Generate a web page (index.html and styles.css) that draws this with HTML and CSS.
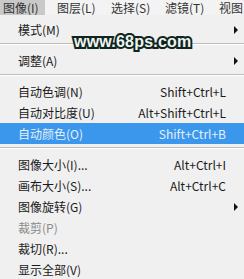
FILE: index.html
```html
<!DOCTYPE html>
<html lang="zh-CN">
<head>
    <meta charset="UTF-8">
    <meta name="viewport" content="width=device-width, initial-scale=1.0">
    <title>图像菜单</title>
    <link rel="stylesheet" href="styles.css">
</head>
<body>
    <div class="menubar">
        <span class="menubar-item active">图像(I)</span>
        <span class="menubar-item">图层(L)</span>
        <span class="menubar-item">选择(S)</span>
        <span class="menubar-item">滤镜(T)</span>
        <span class="menubar-item">视图</span>
    </div>
    <div class="menu">
        <div class="item"><span>模式(M)</span><span class="arrow"></span></div>
        <div class="sep"></div>
        <div class="item"><span>调整(A)</span><span class="arrow"></span></div>
        <div class="sep"></div>
        <div class="item"><span>自动色调(N)</span><span class="key">Shift+Ctrl+L</span></div>
        <div class="item"><span>自动对比度(U)</span><span class="key">Alt+Shift+Ctrl+L</span></div>
        <div class="item selected"><span>自动颜色(O)</span><span class="key">Shift+Ctrl+B</span></div>
        <div class="sep"></div>
        <div class="item"><span>图像大小(I)...</span><span class="key">Alt+Ctrl+I</span></div>
        <div class="item"><span>画布大小(S)...</span><span class="key">Alt+Ctrl+C</span></div>
        <div class="item"><span>图像旋转(G)</span><span class="arrow"></span></div>
        <div class="item disabled"><span>裁剪(P)</span></div>
        <div class="item"><span>裁切(R)...</span></div>
        <div class="item"><span>显示全部(V)</span></div>
    </div>
    <div class="watermark">www.68ps.com</div>
</body>
</html>
```

FILE: styles.css
```css
body {
    margin: 0;
    padding: 0;
    width: 244px;
    height: 279px;
    overflow: hidden;
    position: relative;
    background-color: #f0f0f0;
    color: #1a1a1a;
    font-family: "Noto Sans CJK SC", "Noto Sans", sans-serif;
    font-size: 12px;
}
.menubar {
    display: flex;
    gap: 9px;
    height: 15px;
    background-color: #f3f3f3;
    line-height: 15px;
    color: #333;
    overflow: hidden;
}
.menubar-item {
    flex: none;
    width: 45px;
    box-sizing: border-box;
    padding-left: 3px;
    white-space: nowrap;
}
.menubar-item:last-child {
    width: 26px;
}
.menubar-item.active {
    background-color: #c9c9c9;
}
.menu {
    padding-top: 4px;
    background-color: #f0f0f0;
}
.item {
    display: flex;
    align-items: center;
    justify-content: space-between;
    height: 21px;
    padding: 0 18px;
}
.item.selected {
    background-color: #3b97ec;
    color: #e6f0fb;
}
.item.disabled {
    color: #8c8c8c;
}
.arrow {
    width: 0;
    height: 0;
    margin-right: -12px;
    border-top: 4px solid transparent;
    border-bottom: 4px solid transparent;
    border-left: 4px solid #111;
}
.sep {
    height: 1px;
    margin: 3px 0 5px;
    background-color: #bdbdbd;
    border-bottom: 1px solid #fff;
}
.watermark {
    position: absolute;
    left: 74px;
    top: 33px;
    font-family: "Liberation Sans", Arial, sans-serif;
    font-weight: bold;
    font-size: 16px;
    letter-spacing: 0.2px;
    color: #eef4f0;
    -webkit-text-stroke: 4px #102420;
    paint-order: stroke fill;
}
```
